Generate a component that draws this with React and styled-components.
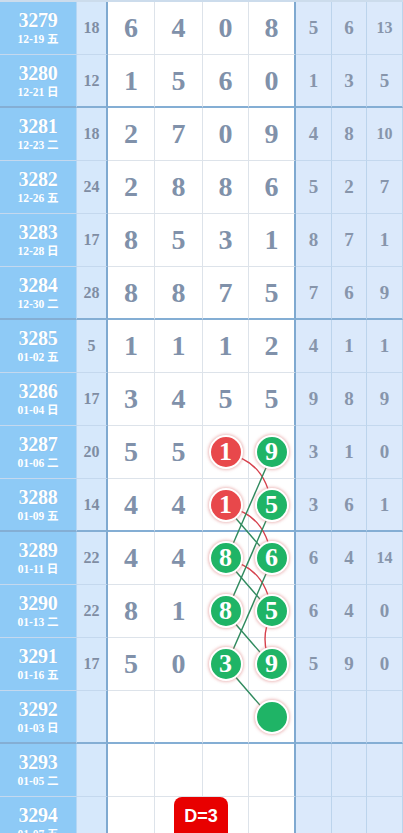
import React from 'react'
import styled, {createGlobalStyle} from 'styled-components'

const GlobalStyle = createGlobalStyle`
  html, body {
    margin: 0;
    padding: 0;
    background: #fff;
    overflow: hidden;
  }
`

const rows = [
  ['3279', '12-19 五', 18, [6, 4, 0, 8], [5, 6, 13]],
  ['3280', '12-21 日', 12, [1, 5, 6, 0], [1, 3, 5]],
  ['3281', '12-23 二', 18, [2, 7, 0, 9], [4, 8, 10]],
  ['3282', '12-26 五', 24, [2, 8, 8, 6], [5, 2, 7]],
  ['3283', '12-28 日', 17, [8, 5, 3, 1], [8, 7, 1]],
  ['3284', '12-30 二', 28, [8, 8, 7, 5], [7, 6, 9]],
  ['3285', '01-02 五', 5, [1, 1, 1, 2], [4, 1, 1]],
  ['3286', '01-04 日', 17, [3, 4, 5, 5], [9, 8, 9]],
  ['3287', '01-06 二', 20, [5, 5, 'r1', 'g9'], [3, 1, 0]],
  ['3288', '01-09 五', 14, [4, 4, 'r1', 'g5'], [3, 6, 1]],
  ['3289', '01-11 日', 22, [4, 4, 'g8', 'g6'], [6, 4, 14]],
  ['3290', '01-13 二', 22, [8, 1, 'g8', 'g5'], [6, 4, 0]],
  ['3291', '01-16 五', 17, [5, 0, 'g3', 'g9'], [5, 9, 0]],
  ['3292', '01-03 日', '', ['', '', '', 'g'], ['', '', '']],
  ['3293', '01-05 二', '', ['', '', '', ''], ['', '', '']],
  ['3294', '01-07 五', '', ['', '', '', ''], ['', '', '']],
]

// thick separator after every 4th row (3280, 3284, 3288, 3292)
const isThick = issue => (Number(issue) - 3280) % 4 === 0

const X3 = 226
const X4 = 272
const cy = i => 28 + 53 * i

const greenLinks = [
  [X4, cy(8), X3, cy(10)],
  [X4, cy(9), X3, cy(11)],
  [X4, cy(10), X3, cy(12)],
  [X3, cy(9), X4, cy(10)],
  [X3, cy(10), X4, cy(11)],
  [X3, cy(11), X4, cy(12)],
  [X3, cy(12), X4, cy(13)],
]

const redCurves = [
  `M${X3} ${cy(8)} Q ${X4 - 6} ${cy(8) + 6} ${X4} ${cy(9)}`,
  `M${X3} ${cy(9)} Q ${X4 - 6} ${cy(9) + 6} ${X4} ${cy(10)}`,
  `M${X3} ${cy(10)} Q ${X4 - 6} ${cy(10) + 6} ${X4} ${cy(11)}`,
  `M${X4} ${cy(11)} Q ${X4 - 14} ${cy(11) + 26} ${X4} ${cy(12)}`,
]

export default function App() {
  return (
    <>
      <GlobalStyle />
      <Board>
        {rows.map(([issue, date, sum, main, tail]) => {
          const thick = isThick(issue)
          return (
            <Row key={issue}>
              <IssueCell $thick={thick}>
                <strong>{issue}</strong>
                <small>{date}</small>
              </IssueCell>
              <SumCell $thick={thick}>{sum}</SumCell>
              {main.map((v, i) => (
                <MainCell key={i} $thick={thick} $last={i === 3}>
                  {typeof v === 'string' && v !== '' ? (
                    <Ball $red={v[0] === 'r'}>{v.slice(1)}</Ball>
                  ) : (
                    v
                  )}
                </MainCell>
              ))}
              {tail.map((v, i) => (
                <TailCell key={i} $thick={thick} $small={String(v).length > 1}>
                  {v}
                </TailCell>
              ))}
              {issue === '3294' && <Badge>D=3</Badge>}
            </Row>
          )
        })}
        <Links width="403" height="860" viewBox="0 0 403 860">
          {redCurves.map((d, i) => (
            <path key={i} d={d} fill="none" stroke="#d6404c" strokeWidth="1.4" />
          ))}
          {greenLinks.map(([x1, y1, x2, y2], i) => (
            <line
              key={i}
              x1={x1}
              y1={y1}
              x2={x2}
              y2={y2}
              stroke="#2f8a5e"
              strokeWidth="1.4"
            />
          ))}
        </Links>
      </Board>
    </>
  )
}

const Board = styled.div`
  position: relative;
  width: 403px;
  border-top: 2px solid #ccdcec;
`

const Row = styled.div`
  position: relative;
  display: grid;
  grid-template-columns: 77px 31px 47px 48px 46px 47px 36px 35px 36px;
  height: 53px;
`

const Cell = styled.div`
  box-sizing: border-box;
  display: flex;
  align-items: center;
  justify-content: center;
  font-family: 'Liberation Serif', 'Noto Sans CJK SC', serif;
  font-weight: bold;
  border-bottom: ${p => (p.$thick ? '2px solid #84aed4' : '1px solid #c4d8ee')};
`

const IssueCell = styled(Cell)`
  flex-direction: column;
  background: #8ecaf6;
  color: #fff;
  border-right: 1px solid #b4d6f4;
  line-height: 1;
  strong {
    font-size: 20px;
    letter-spacing: -0.3px;
    text-shadow: 0 0 1px rgba(90, 140, 190, 0.4);
  }
  small {
    margin-top: 4px;
    font-size: 11.5px;
  }
`

const SumCell = styled(Cell)`
  background: #d6e8fb;
  color: #7f8da3;
  font-size: 16px;
  border-right: 2px solid #7fa9d0;
`

const MainCell = styled(Cell)`
  background: #fff;
  color: #8091aa;
  font-size: 28px;
  border-right: ${p => (p.$last ? '2px solid #7fa9d0' : '1px solid #dde3ea')};
  border-bottom-color: ${p => (p.$thick ? '#84aed4' : '#dde3ea')};
`

const TailCell = styled(Cell)`
  background: #dbe9fb;
  color: #8795ab;
  font-size: ${p => (p.$small ? '16px' : '19px')};
  border-right: 1px solid #bcd4ec;
`

const Ball = styled.span`
  position: relative;
  z-index: 2;
  box-sizing: border-box;
  width: 34px;
  height: 34px;
  border-radius: 50%;
  border: 2px solid #fff;
  background: ${p => (p.$red ? '#e8484b' : '#1fb466')};
  box-shadow: 0 0 3px 1px rgba(214, 110, 110, 0.45);
  color: #fff;
  font-size: 26px;
  display: flex;
  align-items: center;
  justify-content: center;
  line-height: 1;
`

const Links = styled.svg`
  position: absolute;
  top: 0;
  left: 0;
  z-index: 1;
  pointer-events: none;
`

const Badge = styled.div`
  position: absolute;
  top: 0;
  left: 174px;
  width: 54px;
  height: 44px;
  box-sizing: border-box;
  padding-top: 9px;
  border-radius: 8px;
  background: #e80000;
  color: #fff;
  font-family: 'Liberation Sans', Arial, sans-serif;
  font-weight: bold;
  font-size: 18px;
  text-align: center;
  z-index: 3;
`
